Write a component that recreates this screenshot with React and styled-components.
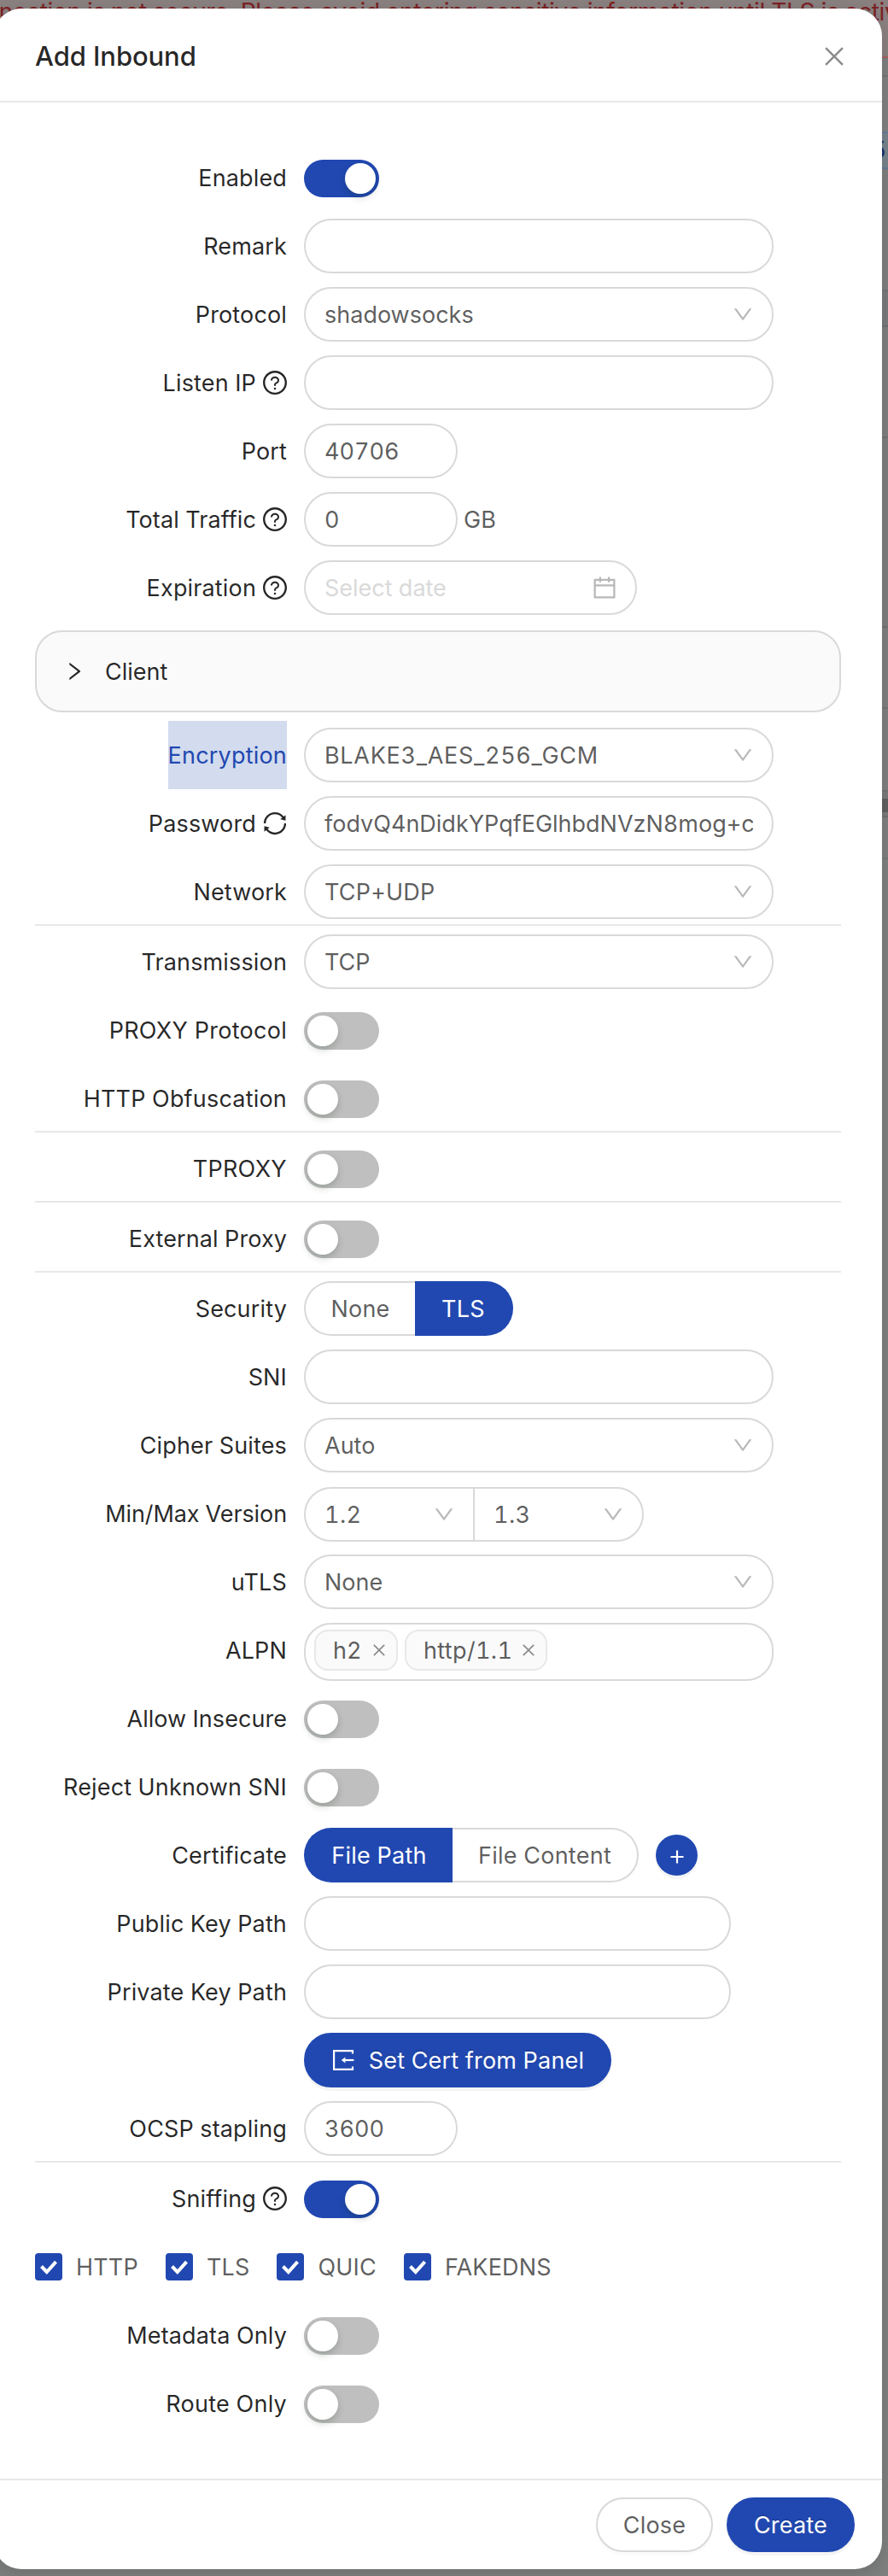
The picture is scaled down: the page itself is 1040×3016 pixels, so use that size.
import React from "react";
import styled, { createGlobalStyle, css } from "styled-components";
import {
  AiOutlineCalendar,
  AiOutlineClose,
  AiOutlineDown,
  AiOutlineQuestionCircle,
  AiOutlineRight,
  AiOutlineSync,
} from "react-icons/ai";

const color = {
  primary: "#2148b1",
  heading: "rgba(0, 0, 0, 0.85)",
  text: "rgba(0, 0, 0, 0.65)",
  muted: "rgba(0, 0, 0, 0.45)",
  border: "#d9d9d9",
  split: "#e8e8e8",
  soft: "#fafafa",
};

const GlobalStyle = createGlobalStyle`
  * { box-sizing: border-box; }
  body {
    margin: 0;
    font-family: Inter, Roboto, "Liberation Sans", sans-serif;
    font-size: 27px;
    font-variant-numeric: tabular-nums;
    color: ${color.text};
    -webkit-font-smoothing: antialiased;
  }
  svg { display: block; flex: none; }
`;

const Page = styled.div`
  position: relative;
  width: 1040px;
  height: 3016px;
  overflow: hidden;
  background: #7f8080;
`;

const Backdrop = styled.div`
  position: absolute;
  inset: 0;
  display: flex;
  flex-direction: column;
`;

const Band = styled.div`
  height: ${(p) => p.$h}px;
  flex: none;
  overflow: hidden;
  background: ${(p) => p.$bg};
  ${(p) => p.$line && css`border-bottom: 2px solid ${p.$line};`}
`;

const AlertText = styled.div`
  display: flex;
  justify-content: flex-end;
  width: 1067px;
  font-size: 28px;
  letter-spacing: -0.3px;
  line-height: 28px;
  white-space: nowrap;
  color: #7b2224;
`;

const Stat = styled.div`
  display: flex;
  justify-content: flex-end;
  padding-right: 2px;
  line-height: 40px;
  color: #15296b;
`;

const Modal = styled.section`
  position: relative;
  display: flex;
  flex-direction: column;
  width: 1040px;
  height: 2998px;
  margin: 10px 0 0 -7px;
  border-radius: 32px;
  background: #fff;
  box-shadow: 0 8px 24px rgba(0, 0, 0, 0.15);
`;

const Header = styled.header`
  display: flex;
  align-items: center;
  justify-content: space-between;
  height: 110px;
  padding: 3px 40px 0 48px;
  border-bottom: 2px solid ${color.split};
  svg { color: ${color.muted}; }
`;

const Title = styled.h1`
  margin: 0;
  font-size: 31px;
  font-weight: 500;
  line-height: 44px;
  letter-spacing: -0.1px;
  color: ${color.heading};
`;

const Body = styled.div`
  flex: 1;
  padding: 48px;
`;

const Footer = styled.footer`
  display: flex;
  justify-content: flex-end;
  gap: 16px;
  height: 106px;
  padding: 20px 32px;
  border-top: 2px solid ${color.split};
`;

const RowBox = styled.div`
  display: flex;
  align-items: center;
  height: 80px;
`;

const LabelCell = styled.div`
  display: flex;
  justify-content: flex-end;
  width: 315px;
  padding-right: 20px;
`;

const Label = styled.label`
  display: flex;
  align-items: center;
  gap: 8px;
  height: 80px;
  white-space: nowrap;
  letter-spacing: ${(p) => p.$track ?? 0.15}px;
  color: ${(p) => (p.$selected ? color.primary : color.heading)};
  background: ${(p) => (p.$selected ? "#d3dbee" : "transparent")};
`;

const Control = styled.div`
  display: flex;
  align-items: center;
  padding-top: ${(p) => p.$nudge || 0}px;
`;

const Divider = styled.hr`
  height: 2px;
  margin: -2px 0 2px;
  border: 0;
  background: ${color.split};
`;

const field = css`
  height: 64px;
  border: 2px solid ${color.border};
  border-radius: 32px;
  background: #fff;
`;

const Input = styled.input`
  ${field}
  width: ${(p) => p.$w || 550}px;
  padding: 0 22px;
  font: inherit;
  font-variant-numeric: tabular-nums;
  color: ${color.text};
  outline: none;
`;

const SelectBox = styled.div`
  ${field}
  display: flex;
  align-items: center;
  justify-content: space-between;
  width: ${(p) => p.$w || 550}px;
  padding: 0 22px;
  letter-spacing: ${(p) => p.$track || 0}px;
  svg { color: #b8b8b8; }
  ${(p) => p.$join === "left" && css`border-radius: 32px 0 0 32px;`}
  ${(p) => p.$join === "right" && css`
    margin-left: -2px;
    border-radius: 0 32px 32px 0;
  `}
`;

const DateBox = styled(SelectBox)`
  color: #d9d9d9;
`;

const Suffix = styled.span`
  margin-left: 7px;
`;

const Track = styled.button`
  display: flex;
  justify-content: ${(p) => (p.$on ? "flex-end" : "flex-start")};
  width: 88px;
  height: 44px;
  padding: 4px;
  border: 0;
  border-radius: 22px;
  background: ${(p) => (p.$on ? color.primary : "#bfbfbf")};
`;

const Knob = styled.span`
  width: 36px;
  height: 36px;
  border-radius: 50%;
  background: #fff;
  box-shadow: 0 4px 8px rgba(0, 35, 11, 0.2);
`;

const Segments = styled.div`
  display: flex;
`;

const Segment = styled.button`
  height: 64px;
  width: ${(p) => p.$w}px;
  padding: 0;
  font: inherit;
  letter-spacing: 0.25px;
  color: ${(p) => (p.$active ? "#fff" : color.text)};
  background: ${(p) => (p.$active ? color.primary : "#fff")};
  border: 2px solid ${(p) => (p.$active ? color.primary : color.border)};
  &:first-child { border-radius: 32px 0 0 32px; border-right-width: 0; }
  &:last-child { border-radius: 0 32px 32px 0; border-left-width: 0; }
`;

const AddButton = styled.button`
  display: flex;
  align-items: center;
  justify-content: center;
  width: 49px;
  height: 48px;
  margin-left: 20px;
  padding: 3px 0 0;
  border: 0;
  border-radius: 50%;
  color: #fff;
  background: ${color.primary};
  box-shadow: 0 4px 0 rgba(0, 0, 0, 0.045);
`;

const Button = styled.button`
  display: flex;
  align-items: center;
  justify-content: center;
  gap: 16px;
  width: ${(p) => p.$w}px;
  height: 64px;
  padding: 0;
  font: inherit;
  letter-spacing: 0.2px;
  border-radius: 32px;
  ${(p) => p.$primary ? css`
    color: #fff;
    border: 2px solid ${color.primary};
    background: ${color.primary};
    text-shadow: 0 -2px 0 rgba(0, 0, 0, 0.12);
    box-shadow: 0 4px 0 rgba(0, 0, 0, 0.045);
  ` : css`
    color: ${color.text};
    border: 2px solid ${color.border};
    background: #fff;
    box-shadow: 0 4px 0 rgba(0, 0, 0, 0.015);
  `}
`;

const TagField = styled.div`
  ${field}
  display: flex;
  gap: 8px;
  width: 550px;
  height: 68px;
  padding: 6px 10px;
`;

const Tag = styled.span`
  display: flex;
  align-items: center;
  justify-content: space-between;
  width: ${(p) => p.$w}px;
  height: 48px;
  padding: 0 10px 0 20px;
  border: 2px solid ${color.split};
  border-radius: 16px;
  background: ${color.soft};
  letter-spacing: ${(p) => p.$track || 0}px;
  svg { color: ${color.muted}; }
`;

const Panel = styled.div`
  display: flex;
  align-items: center;
  height: 96px;
  margin: 10px 0;
  padding-left: 32px;
  gap: 24px;
  border: 2px solid ${color.border};
  border-radius: 32px;
  background: ${color.soft};
  color: ${color.heading};
`;

const CheckRow = styled.div`
  display: flex;
  align-items: center;
  gap: 32px;
  height: 80px;
`;

const CheckLabel = styled.label`
  display: flex;
  align-items: center;
  gap: 16px;
  letter-spacing: 0.18px;
`;

const CheckBox = styled.span`
  display: flex;
  align-items: center;
  justify-content: center;
  width: 32px;
  height: 32px;
  border-radius: 4px;
  background: ${color.primary};
`;

const tight = "64 64 896 896";
const hints = { help: AiOutlineQuestionCircle, sync: AiOutlineSync };

function Row({ label, hint, selected, nudge, track, children }) {
  const Hint = hints[hint];
  return (
    <RowBox>
      <LabelCell>
        {label && (
          <Label $selected={selected} $track={track}>
            {label}
            {Hint && <Hint size={28} viewBox={tight} />}
          </Label>
        )}
      </LabelCell>
      <Control $nudge={nudge}>{children}</Control>
    </RowBox>
  );
}

function Select({ value, w, join, track }) {
  return (
    <SelectBox $w={w} $join={join} $track={track}>
      {value}
      <AiOutlineDown size={24} viewBox={tight} />
    </SelectBox>
  );
}

function Switch({ on }) {
  return (
    <Track type="button" $on={on}>
      <Knob />
    </Track>
  );
}

function ImportIcon() {
  return (
    <svg width="28" height="28" viewBox="0 0 28 28" fill="none" stroke="currentColor" strokeWidth="2.2">
      <path d="M25 6.4 V3.2 H3.1 V24.8 H25 V21.6" />
      <path d="M15.5 14 H26.4" />
      <path d="M11.8 14 L16.4 10.4 V17.6 Z" fill="currentColor" stroke="none" />
    </svg>
  );
}

function PlusIcon() {
  return (
    <svg width="16" height="16" viewBox="0 0 16 16" stroke="currentColor" strokeWidth="2.2">
      <path d="M8 0.5 V15.5 M0.5 8 H15.5" />
    </svg>
  );
}

function Check({ children }) {
  return (
    <CheckLabel>
      <CheckBox>
        <svg width="32" height="32" viewBox="0 0 32 32" fill="none" stroke="#fff" strokeWidth="4">
          <path d="M7.5 15.5 L13.8 22 L24.5 10.2" />
        </svg>
      </CheckBox>
      {children}
    </CheckLabel>
  );
}

const bands = [
  { h: 22, bg: "#7e8081", line: "#767778" },
  { h: 66, bg: "#828282", line: "#647b9e" },
  { h: 42, bg: "#78848c", line: "#647b9e", stat: "5" },
  { h: 143, bg: "#808080", line: "#747474" },
  { h: 42, bg: "#797b7c", line: "#727272" },
  { h: 130, bg: "#808080", line: "#747474" },
  { h: 222, bg: "#7f7f7f", line: "#747474" },
  { h: 95, bg: "#808080", line: "#747474" },
  { h: 97, bg: "#808080", line: "#747474" },
  { h: 8, bg: "#7c7c7c" },
  { h: 16, bg: "#626262" },
  { h: 6, bg: "#7c7c7c", line: "#727272" },
  { h: 49, bg: "#808080", line: "#767778" },
];

export default function App() {
  return (
    <Page>
      <GlobalStyle />
      <Backdrop>
        <Band $h={68} $bg="#8a8080" $line="#a8605f">
          <AlertText>
            This connection is not secure. Please avoid entering sensitive information until TLS is active
          </AlertText>
        </Band>
        {bands.map((b, i) => (
          <Band key={i} $h={b.h} $bg={b.bg} $line={b.line}>
            {b.stat && <Stat>{b.stat}</Stat>}
          </Band>
        ))}
      </Backdrop>
      <Modal>
        <Header>
          <Title>Add Inbound</Title>
          <AiOutlineClose size={32} />
        </Header>
        <Body>
          <Row label="Enabled" nudge={2}><Switch on /></Row>
          <Row label="Remark"><Input /></Row>
          <Row label="Protocol"><Select value="shadowsocks" /></Row>
          <Row label="Listen IP" hint="help"><Input /></Row>
          <Row label="Port"><Input $w={180} defaultValue="40706" /></Row>
          <Row label="Total Traffic" hint="help" track={0.1}>
            <Input $w={180} defaultValue="0" />
            <Suffix>GB</Suffix>
          </Row>
          <Row label="Expiration" hint="help">
            <DateBox $w={390}>
              Select date
              <AiOutlineCalendar size={28} viewBox={tight} />
            </DateBox>
          </Row>
          <Panel>
            <AiOutlineRight size={24} viewBox={tight} />
            Client
          </Panel>
          <Row label="Encryption" selected track={0.2}>
            <Select value="BLAKE3_AES_256_GCM" track={0.7} />
          </Row>
          <Row label="Password" hint="sync">
            <Input defaultValue="fodvQ4nDidkYPqfEGlhbdNVzN8mog+c" />
          </Row>
          <Row label="Network"><Select value="TCP+UDP" track={0.2} /></Row>
          <Divider />
          <Row label="Transmission"><Select value="TCP" /></Row>
          <Row label="PROXY Protocol" nudge={2} track={0.28}><Switch /></Row>
          <Row label="HTTP Obfuscation" nudge={2} track={0.2}><Switch /></Row>
          <Divider />
          <Row label="TPROXY" nudge={2} track={0.3}><Switch /></Row>
          <Divider />
          <Row label="External Proxy" nudge={2} track={0.1}><Switch /></Row>
          <Divider />
          <Row label="Security">
            <Segments>
              <Segment $w={130}>None</Segment>
              <Segment $w={115} $active>TLS</Segment>
            </Segments>
          </Row>
          <Row label="SNI"><Input /></Row>
          <Row label="Cipher Suites"><Select value="Auto" /></Row>
          <Row label="Min/Max Version" nudge={2} track={-0.1}>
            <Select value="1.2" w={200} join="left" track={0.4} />
            <Select value="1.3" w={200} join="right" track={0.4} />
          </Row>
          <Row label="uTLS"><Select value="None" /></Row>
          <Row label="ALPN" nudge={4}>
            <TagField>
              <Tag $w={98}>h2<AiOutlineClose size={20} /></Tag>
              <Tag $w={167} $track={0.35}>http/1.1<AiOutlineClose size={20} /></Tag>
            </TagField>
          </Row>
          <Row label="Allow Insecure" nudge={2} track={0.05}><Switch /></Row>
          <Row label="Reject Unknown SNI" nudge={2}><Switch /></Row>
          <Row label="Certificate">
            <Segments>
              <Segment $w={174} $active>File Path</Segment>
              <Segment $w={218}>File Content</Segment>
            </Segments>
            <AddButton><PlusIcon /></AddButton>
          </Row>
          <Row label="Public Key Path"><Input $w={500} /></Row>
          <Row label="Private Key Path"><Input $w={500} /></Row>
          <Row>
            <Button $primary $w={360}>
              <ImportIcon />
              Set Cert from Panel
            </Button>
          </Row>
          <Row label="OCSP stapling"><Input $w={180} defaultValue="3600" /></Row>
          <Divider />
          <Row label="Sniffing" hint="help" nudge={2}><Switch on /></Row>
          <CheckRow>
            <Check>HTTP</Check>
            <Check>TLS</Check>
            <Check>QUIC</Check>
            <Check>FAKEDNS</Check>
          </CheckRow>
          <Row label="Metadata Only" nudge={2}><Switch /></Row>
          <Row label="Route Only" nudge={2} track={0.25}><Switch /></Row>
        </Body>
        <Footer>
          <Button $w={137}>Close</Button>
          <Button $primary $w={150}>Create</Button>
        </Footer>
      </Modal>
    </Page>
  );
}
